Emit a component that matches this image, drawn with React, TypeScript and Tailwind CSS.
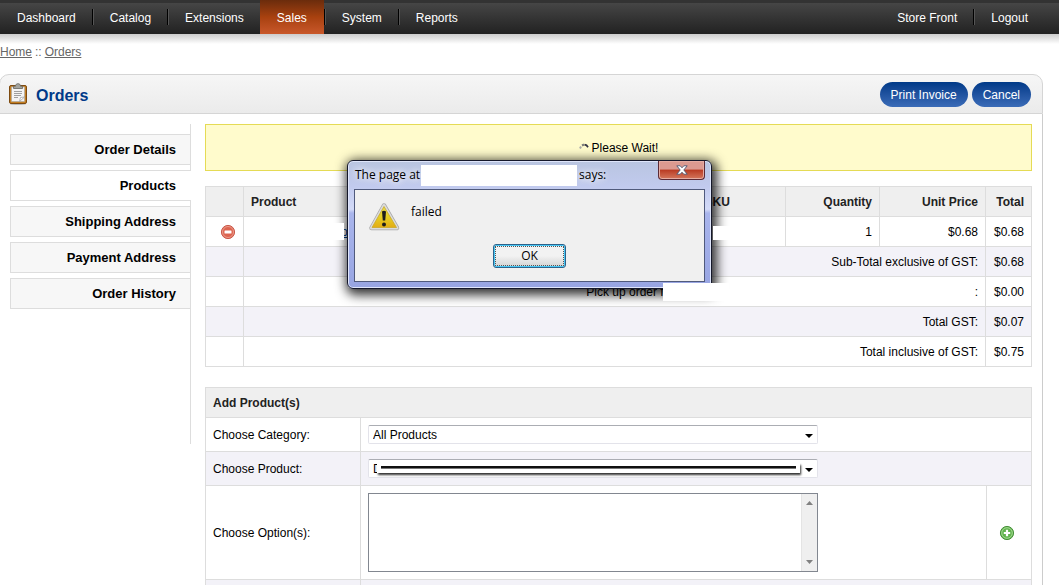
import { useState } from 'react';

const FONT = "font-['Liberation_Sans',Arial,sans-serif]";
const DIALOG_FONT = "font-['Open_Sans','Noto_Sans',sans-serif]";

const MENU = ['Dashboard', 'Catalog', 'Extensions', 'Sales', 'System', 'Reports'];
const TABS = ['Order Details', 'Products', 'Shipping Address', 'Payment Address', 'Order History'];

const TOTALS = [
    { label: 'Sub-Total exclusive of GST:', value: '$0.68' },
    { label: ':', value: '$0.00', note: 'Pick up order f' },
    { label: 'Total GST:', value: '$0.07' },
    { label: 'Total inclusive of GST:', value: '$0.75' },
];

function ClipboardIcon() {
    return (
        <svg width="20" height="22" viewBox="0 0 20 22" aria-hidden="true">
            <ellipse cx="10" cy="21" rx="8" ry="1" fill="#bbb" />
            <rect x="1.5" y="2.5" width="17" height="18" rx="1.5" fill="#c47f22" stroke="#7d4a10" />
            <rect x="3.5" y="4" width="13" height="14.5" fill="#f4f4f4" stroke="#a9a9a9" strokeWidth=".6" />
            <path d="M11.5 18.5l1-4 4-.5z" fill="#fff" stroke="#999" strokeWidth=".7" />
            <path d="M6 8.5h8M6 10.5h8M6 12.5h7M6 14.5h4" stroke="#a0a0a0" />
            <path d="M5.5 5.500V3.200h2C7.500 1.500 8.500.7 10 .7s2.500.8 2.500 2.500h2v2.300z" fill="#a4a49e" stroke="#666660" strokeWidth=".8" />
        </svg>
    );
}

function RemoveIcon() {
    return (
        <svg width="16" height="16" viewBox="0 0 16 16" aria-hidden="true">
            <circle cx="8" cy="8" r="6.600" fill="#dc6450" stroke="#c95a4b" />
            <circle cx="8" cy="8" r="5.500" fill="none" stroke="#eda092" strokeWidth=".9" />
            <rect x="4.500" y="6.500" width="7" height="3" rx=".5" fill="#fff" />
        </svg>
    );
}

function AddIcon() {
    return (
        <svg width="16" height="16" viewBox="0 0 16 16" aria-hidden="true">
            <circle cx="8" cy="8" r="6.600" fill="#62b34f" stroke="#48913b" />
            <circle cx="8" cy="8" r="5.300" fill="none" stroke="#a9dc98" strokeWidth=".9" />
            <path d="M8 4.800v6.400M4.800 8h6.400" stroke="#fff" strokeWidth="2.200" />
        </svg>
    );
}

function WarningIcon() {
    return (
        <svg width="32" height="30" viewBox="0 0 32 30" aria-hidden="true">
            <defs>
                <linearGradient id="warn" x1="0" y1="0" x2="0" y2="1">
                    <stop offset="0" stopColor="#e8dc50" />
                    <stop offset=".5" stopColor="#e6cf22" />
                    <stop offset="1" stopColor="#e3ac14" />
                </linearGradient>
            </defs>
            <path d="M15 3.500 28 26H2.500z" fill="#c9c9c9" stroke="#a8a8a8" strokeWidth="4.500" strokeLinejoin="round" />
            <path d="M15 3.500 28 26H2.500z" fill="#ddd" stroke="#dcdcdc" strokeWidth="3" strokeLinejoin="round" />
            <path d="M15 4.500 27.500 25.500H3z" fill="url(#warn)" stroke="#c9a82a" strokeWidth=".8" strokeLinejoin="round" />
            <path d="M13 9.500q2-1.500 4 0l-.8 9h-2.400z" fill="#1d1d1d" />
            <circle cx="15" cy="22.500" r="2" fill="#1d1d1d" />
        </svg>
    );
}

function Spinner() {
    return (
        <svg width="10" height="10" viewBox="0 0 10 10" aria-hidden="true">
            <path d="M1 5.500 2 3.500" stroke="#aaa" strokeWidth="2" />
            <path d="M3 2.500 5 1.500" stroke="#777" strokeWidth="2" />
            <path d="M5.500 1.500l2 .8 1.500 2" stroke="#334" strokeWidth="1.800" fill="none" />
        </svg>
    );
}

function Divider() {
    return <span className="h-4 w-0.5 border-l border-black bg-[#555]" />;
}

function Header() {
    return (
        <header className="border-t-3 border-[#333] bg-linear-to-b from-[#464646] to-[#222] text-[12px] text-white">
            <nav className="-mt-[3px] flex h-[34px] items-center pl-px">
                {MENU.map((item, i) => (
                    <div key={item} className="flex h-full items-center">
                        {i > 0 && item !== 'Sales' && <Divider />}
                        <a
                            href="#"
                            className={
                                item === 'Sales'
                                    ? 'flex h-full items-center bg-linear-to-b from-[#6b2c0c] via-[#a8410f] to-[#c9582a] px-[17px] pt-0.5'
                                    : 'flex h-full items-center px-4 pt-0.5'
                            }
                        >
                            {item}
                        </a>
                    </div>
                ))}
                <div className="ml-auto flex h-full items-center pr-[15px]">
                    <a href="#" className="px-4 pt-0.5">Store Front</a>
                    <Divider />
                    <a href="#" className="px-4 pt-0.5">Logout</a>
                </div>
            </nav>
        </header>
    );
}

function ItemsTable() {
    const cell = 'border border-[#ddd] px-[7px]';
    return (
        <table className="w-full table-fixed border-collapse text-right">
            <colgroup>
                <col className="w-[38px]" />
                <col />
                <col className="w-[88px]" />
                <col className="w-[94px]" />
                <col className="w-[106px]" />
                <col className="w-[46px]" />
            </colgroup>
            <thead>
                <tr className="h-[30px] bg-[#efefef] text-[#222]">
                    <th className={cell}></th>
                    <th className="border-y border-[#ddd] px-[7px] text-left">Product</th>
                    <th className="border-y border-[#ddd] px-[7px] text-left">SKU</th>
                    <th className={cell}>Quantity</th>
                    <th className={cell}>Unit Price</th>
                    <th className={cell}>Total</th>
                </tr>
            </thead>
            <tbody>
                <tr className="h-[30px]">
                    <td className={cell}>
                        <button type="button" aria-label="Remove product" className="ml-auto block"><RemoveIcon /></button>
                    </td>
                    <td className="border-y border-[#ddd] pl-[97px] text-left">
                        <a href="#" className="text-[#003a88] underline">o</a>
                    </td>
                    <td className="border-y border-[#ddd]"></td>
                    <td className={cell}>1</td>
                    <td className={cell}>$0.68</td>
                    <td className={cell}>$0.68</td>
                </tr>
                {TOTALS.map(t => (
                    <tr key={t.label} className="h-[30px] odd:bg-white even:bg-[#f3f2f8]">
                        <td className={cell}></td>
                        <td colSpan={4} className={cell}>
                            {t.note && <span className="mr-[311px]">{t.note}</span>}
                            {t.label}
                        </td>
                        <td className={cell}>{t.value}</td>
                    </tr>
                ))}
            </tbody>
        </table>
    );
}

function Arrow() {
    return (
        <svg width="8" height="4" viewBox="0 0 8 4" className="pointer-events-none absolute right-[5px] top-[9px]" aria-hidden="true">
            <path d="M0 0h8L4 4z" fill="#000" />
        </svg>
    );
}

function AddProducts() {
    const cell = 'border border-[#ddd] px-[7px]';
    const select = 'block h-[19px] w-full appearance-none rounded-xs border border-[#e3e3ea] border-t-[#abadb3] bg-white pl-1 leading-4';
    return (
        <table className="mt-5 w-full table-fixed border-collapse">
            <colgroup>
                <col className="w-[155px]" />
                <col />
                <col className="w-[45px]" />
            </colgroup>
            <thead>
                <tr className="h-[30px] bg-[#efefef] text-left text-[#222]">
                    <th colSpan={3} className={cell}>Add Product(s)</th>
                </tr>
            </thead>
            <tbody>
                <tr className="h-[34px]">
                    <td className={cell}><label htmlFor="category">Choose Category:</label></td>
                    <td colSpan={2} className={cell}>
                        <div className="relative w-[450px]">
                            <select id="category" className={select}><option>All Products</option></select>
                            <Arrow />
                        </div>
                    </td>
                </tr>
                <tr className="h-[34px] bg-[#f3f2f8]">
                    <td className={cell}><label htmlFor="product">Choose Product:</label></td>
                    <td colSpan={2} className={cell}>
                        <div className="relative w-[450px]">
                            <select id="product" className={select}><option>D</option></select>
                            <div className="absolute left-[9px] right-[18px] top-1 h-2.5 bg-white px-1 py-[3px] shadow-[1px_2px_2px_#333]">
                                <div className="h-[3px] border-b border-[#777] bg-[#111]" />
                            </div>
                            <Arrow />
                        </div>
                    </td>
                </tr>
                <tr className="h-[94px]">
                    <td className={cell}><label htmlFor="options">Choose Option(s):</label></td>
                    <td className={cell}>
                        <div className="relative w-[450px]">
                            <textarea id="options" className="block h-[79px] w-full resize-none border border-[#828790] bg-white" />
                            <div className="absolute inset-y-px right-px flex w-4 flex-col items-center justify-between border-l border-[#e4e4e4] bg-[#efefef] py-[7px]">
                                <svg width="7" height="4" viewBox="0 0 7 4" aria-hidden="true"><path d="M0 4h7L3.500 0z" fill="#808080" /></svg>
                                <svg width="7" height="4" viewBox="0 0 7 4" aria-hidden="true"><path d="M0 0h7L3.500 4z" fill="#808080" /></svg>
                            </div>
                        </div>
                    </td>
                    <td className={cell}>
                        <button type="button" aria-label="Add product" className="ml-[5px] block"><AddIcon /></button>
                    </td>
                </tr>
                <tr className="h-[34px] bg-[#f3f2f8]">
                    <td className={cell}></td>
                    <td colSpan={2} className={cell}></td>
                </tr>
            </tbody>
        </table>
    );
}

function AlertDialog({ onClose }: { onClose: () => void }) {
    return (
        <div
            role="alertdialog"
            aria-labelledby="alert-title"
            className={`${DIALOG_FONT} absolute left-[347px] top-40 w-[365px] rounded-md border border-[#15182a] bg-[linear-gradient(180deg,#b9c5e0_0%,#c1caee_20%,#d3daf7_38%,#a9b5ec_41%,#98a5e2_100%)] px-1.5 pb-1.5 text-[12px] text-black shadow-[inset_0_0_0_1px_#dfe5fa,2px_3px_11px_3px_rgba(0,0,0,0.8)]`}
        >
            <div id="alert-title" className="flex h-7 items-center pl-px [text-shadow:0_0_6px_#fff,0_0_10px_#fff]">
                <span className="w-[66px] whitespace-nowrap">The page at</span>
                <span className="h-[21px] w-[156px] bg-white" />
                <span className="pl-0.5">says:</span>
            </div>
            <button
                type="button"
                aria-label="Close"
                onClick={onClose}
                className="absolute right-1.5 top-0 flex h-[19px] w-[47px] items-center justify-center rounded-b border border-t-0 border-[#5b2a35] bg-linear-to-b from-[#dc9a90] from-45% via-[#b93a22] via-50% to-[#d4765c] shadow-[inset_0_0_0_1px_#e5aca2]"
            >
                <svg width="12" height="10" viewBox="0 0 12 10" aria-hidden="true">
                    <path d="M.8.8h3.400L6 2.800 7.800.8h3.400L7.800 5l3.400 4.200H7.800L6 7.200 4.200 9.200H.8L4.200 5z" fill="#fff" stroke="#4e5670" strokeWidth=".9" />
                </svg>
            </button>
            <div className="flex h-[93px] flex-col border border-[#505a7c] bg-[#f0f0f0] px-3.5 pb-[13px] pt-3">
                <div className="flex gap-2.5">
                    <WarningIcon />
                    <p className="pt-0.5">failed</p>
                </div>
                <button
                    type="button"
                    onClick={onClose}
                    className="mx-auto mt-auto h-6 w-[73px] rounded-[3px] border border-[#2c628b] bg-linear-to-b from-[#f2f2f2] from-50% to-[#d2d2d2] p-px leading-4 shadow-[inset_0_0_0_1px_#48c8f5]"
                >
                    <span className="flex h-full items-center justify-center border border-dotted border-[#555]">OK</span>
                </button>
            </div>
        </div>
    );
}

export default function App() {
    const [tab, setTab] = useState('Products');
    const [alertOpen, setAlertOpen] = useState(true);

    return (
        <div className={`${FONT} relative h-screen overflow-hidden bg-white text-[12px] leading-4 text-black`}>
            <Header />
            <div className="h-2.5 bg-linear-to-b from-[#ccc] to-white" />
            <div className="flex gap-[3px] text-[#666]">
                <a href="#" className="underline">Home</a>
                <span>::</span>
                <a href="#" className="underline">Orders</a>
            </div>

            <main className="mr-4 mt-3.5">
                <div className="-ml-px flex h-10 items-center rounded-t-[10px] border border-[#d5d5d5] bg-linear-to-b from-[#f6f6f6] to-[#ebebeb] pl-2 pr-[11px]">
                    <ClipboardIcon />
                    <h1 className="ml-2 pt-[3px] text-[16px] font-bold text-[#003a88]">Orders</h1>
                    <div className="ml-auto flex gap-1 pt-px text-white">
                        <button type="button" className="h-[25px] rounded-full bg-linear-to-b from-[#003a88] to-[#3b6cb8] px-[11px]">Print Invoice</button>
                        <button type="button" className="h-[25px] rounded-full bg-linear-to-b from-[#003a88] to-[#3b6cb8] px-[11px]">Cancel</button>
                    </div>
                </div>

                <div className="flex items-start border-r border-[#ccc] pb-10 pr-2.5 pt-2.5">
                    <nav className="mr-3.5 flex h-80 w-[191px] shrink-0 flex-col gap-[5px] border-r border-[#ddd] pl-2.5 pt-2.5 text-right text-[13px] font-bold">
                        {TABS.map(t => (
                            <button
                                key={t}
                                type="button"
                                onClick={() => setTab(t)}
                                className={
                                    t === tab
                                        ? '-mr-px h-[31px] border-y border-l border-[#ddd] bg-white pr-[15px] text-right'
                                        : 'h-[31px] border-y border-l border-[#ddd] bg-[#f7f7f7] pr-3.5 text-right'
                                }
                            >
                                {t}
                            </button>
                        ))}
                    </nav>

                    <div className="min-w-0 flex-1">
                        <div className="mb-[15px] flex h-[47px] items-center justify-center gap-[3px] border border-[#e5db55] bg-[#fffbcc]">
                            <Spinner />
                            Please Wait!
                        </div>
                        <ItemsTable />
                        <AddProducts />
                    </div>
                </div>
            </main>

            {alertOpen && (
                <>
                    <AlertDialog onClose={() => setAlertOpen(false)} />
                    <div className="absolute left-[330px] top-[223px] h-[17px] w-3.5 bg-white" />
                    <div className="absolute left-[713px] top-[226px] h-3.5 w-[30px] bg-white" />
                    <div className="absolute left-[663px] top-[283px] h-[18px] w-[66px] bg-white" />
                </>
            )}
        </div>
    );
}
